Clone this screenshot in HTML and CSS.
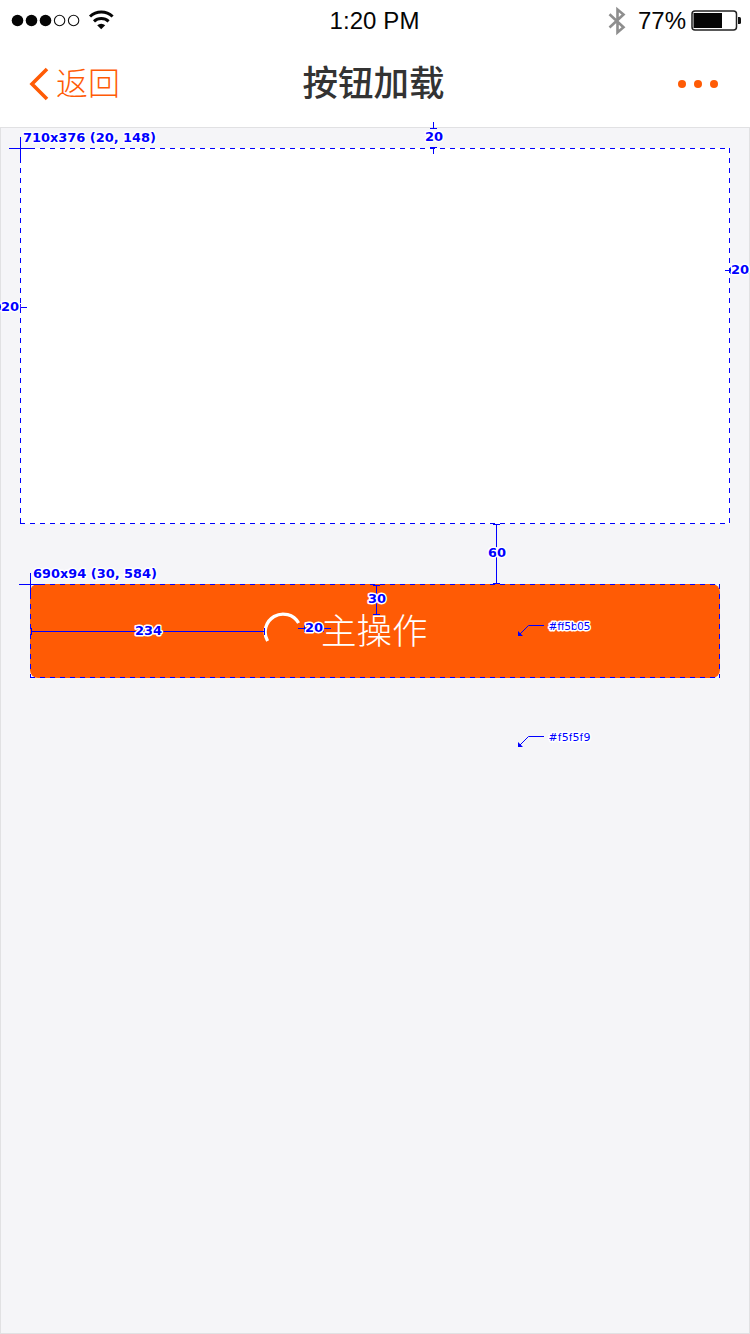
FILE: index.html
```html
<!DOCTYPE html>
<html lang="zh-CN">
<head>
<meta charset="utf-8">
<title>按钮加载</title>
<link rel="stylesheet" href="styles.css">
</head>
<body>
<div class="screen">
  <div class="status">
    <svg class="signal" width="104" height="24" viewBox="0 0 104 24">
      <g fill="#050505"><circle cx="7.5" cy="12.5" r="5.8"/><circle cx="21.5" cy="12.5" r="5.8"/><circle cx="35.5" cy="12.5" r="5.8"/></g>
      <g fill="none" stroke="#111" stroke-width="1.1"><circle cx="49.6" cy="12.5" r="5.2"/><circle cx="63.6" cy="12.5" r="5.2"/></g>
      <g fill="none" stroke="#050505" stroke-width="3"><path d="M80 8.5a16.5 16.5 0 0 1 22.6 0"/><path d="M84 13.4a10.8 10.8 0 0 1 14.6 0"/></g>
      <path d="M87.2 17.2a6 6 0 0 1 8 0l-4 4z" fill="#050505"/>
    </svg>
    <span class="time">1:20 PM</span>
    <div class="power">
      <svg width="18" height="30" viewBox="0 0 18 30"><path d="M1.5 8.2L15.5 21.3L9.5 26.500V3.500L15.500 8.500L1.500 21.500" fill="none" stroke="#8e8e8e" stroke-width="2.6"/></svg>
      <span class="percent">77%</span>
      <svg class="battery" width="51" height="22" viewBox="0 0 51 22"><rect x="1" y="1" width="44.5" height="19" rx="3" fill="#fff" stroke="#222" stroke-width="1.5"/><path d="M2.500 3h28.500v15h-28.500z" fill="#050505"/><path d="M47 7h1.500q1.500 0 1.500 1.500v4q0 1.500-1.500 1.500H47z" fill="#111"/></svg>
    </div>
  </div>
  <div class="nav">
    <div class="back">
      <svg width="20" height="34" viewBox="0 0 20 34"><path d="M18 2L3 17L18 32" fill="none" stroke="#ff5b05" stroke-width="3.6"/></svg>
      <span>返回</span>
    </div>
    <h1 class="title">按钮加载</h1>
    <div class="more"><i></i><i></i><i></i></div>
  </div>
  <main class="content">
    <div class="panel"></div>
    <button class="action">
      <svg width="38" height="38" viewBox="0 0 38 38"><path d="M4.600 29A17 17 0 0 1 35.600 11" fill="none" stroke="#fff" stroke-width="3.300"/></svg>
      <span>主操作</span>
    </button>
  </main>
  <svg class="marks" width="750" height="1334" viewBox="0 0 750 1334">
    <g class="dash">
      <path d="M20.500 148V524M729.500 148V524M20 148.500H730M20 523.500H730"/>
      <path d="M30.500 584V678M719.500 584V678M30 584.500H720M30 677.500H720"/>
    </g>
    <g class="line">
      <path d="M20.500 137V162M9 148.500H35M30.500 573V598M19 584.500H45"/>
      <path d="M433.500 122V128M430 128.500H437M430 147.500H437M433.500 148V154"/>
      <path d="M0.500 304V310M20.500 304V310M20 307.500H27M725 270.500H731M730.500 267V274M748.500 267V274"/>
      <path d="M496.500 524V584M493 524.500H500M493 583.500H500"/>
      <path d="M31.500 628V635M31 631.500H265M264.500 628V635"/>
      <path d="M376.500 585V615M373 585.500H380M373 614.500H380"/>
      <path d="M298 628.500H331M304.500 625V632M323.500 625V632"/>
      <path d="M544 625.500H528.500L519 635M544 736.500H528.500L519 746"/>
    </g>
    <path d="M518 631v5h5zM518 742v5h5z" fill="#00f"/>
    <g class="label">
      <text x="23" y="142" textLength="133">710x376 (20, 148)</text>
      <text x="33" y="578" textLength="124">690x94 (30, 584)</text>
      <text x="425" y="141" textLength="18">20</text>
      <text x="1" y="311" textLength="18">20</text>
      <text x="731" y="274" textLength="18">20</text>
      <text x="488" y="557" textLength="18">60</text>
      <text x="135" y="635" textLength="27">234</text>
      <text x="368" y="603" textLength="18">30</text>
      <text x="305" y="632" textLength="18">20</text>
    </g>
    <g class="hex">
      <text x="548.500" y="630" textLength="42">#ff5b05</text>
      <text x="548.500" y="741" textLength="42">#f5f5f9</text>
    </g>
  </svg>
</div>
</body>
</html>
```
FILE: styles.css
```css
body { margin: 0; }
.screen {
  position: relative;
  display: flex;
  flex-direction: column;
  width: 750px;
  height: 1334px;
  background: #fff;
  font-family: "Liberation Sans", "Noto Sans CJK SC", sans-serif;
}
.status {
  display: grid;
  grid-template-columns: 1fr auto 1fr;
  align-items: center;
  box-sizing: border-box;
  height: 40px;
  padding: 1px 8px 0 10px;
  font-size: 24px;
  color: #050505;
}
.signal { margin-top: -1px; }
.time { padding-right: 3px; letter-spacing: 0.1px; }
.power { display: flex; align-items: center; justify-content: flex-end; }
.percent { margin: 0 5px 0 12px; }
.nav {
  display: grid;
  grid-template-columns: 1fr auto 1fr;
  align-items: center;
  height: 87px;
  padding: 0 32px 0 29px;
}
.back {
  display: flex;
  align-items: center;
  gap: 7px;
  color: #ff5b05;
  font-size: 32px;
  font-weight: 300;
}
.back span { padding-bottom: 5px; }
.title { margin: 0; padding-bottom: 6px; font-size: 35.5px; font-weight: 500; color: #333; }
.more { display: flex; justify-content: flex-end; gap: 8px; }
.more i { width: 8px; height: 8px; border-radius: 50%; background: #ff5b05; }
.content {
  box-sizing: border-box;
  flex: 1;
  padding: 20px 19px 0;
  border: 1px solid #e1e1e3;
  background: #f5f5f8;
}
.panel { height: 376px; background: #fff; }
.action {
  display: flex;
  align-items: center;
  gap: 20px;
  box-sizing: border-box;
  width: 690px;
  height: 94px;
  margin: 60px 10px 0;
  padding: 0 0 0 233px;
  border: 0;
  border-radius: 8px;
  background: #ff5b05;
  color: #fff;
  font: 300 35.5px "Noto Sans CJK SC", sans-serif;
}
.action span { padding-bottom: 5px; }
.marks { position: absolute; top: 0; left: 0; }
.dash { fill: none; stroke: #00f; stroke-dasharray: 5 5; shape-rendering: crispEdges; }
.line { fill: none; stroke: #00f; }
.label text, .hex text {
  fill: #00f;
  stroke: #fff;
  stroke-width: 3px;
  stroke-linejoin: round;
  paint-order: stroke;
}
.label { font: bold 13px "DejaVu Sans", sans-serif; }
.hex { font: 11px "DejaVu Sans", sans-serif; }
```
